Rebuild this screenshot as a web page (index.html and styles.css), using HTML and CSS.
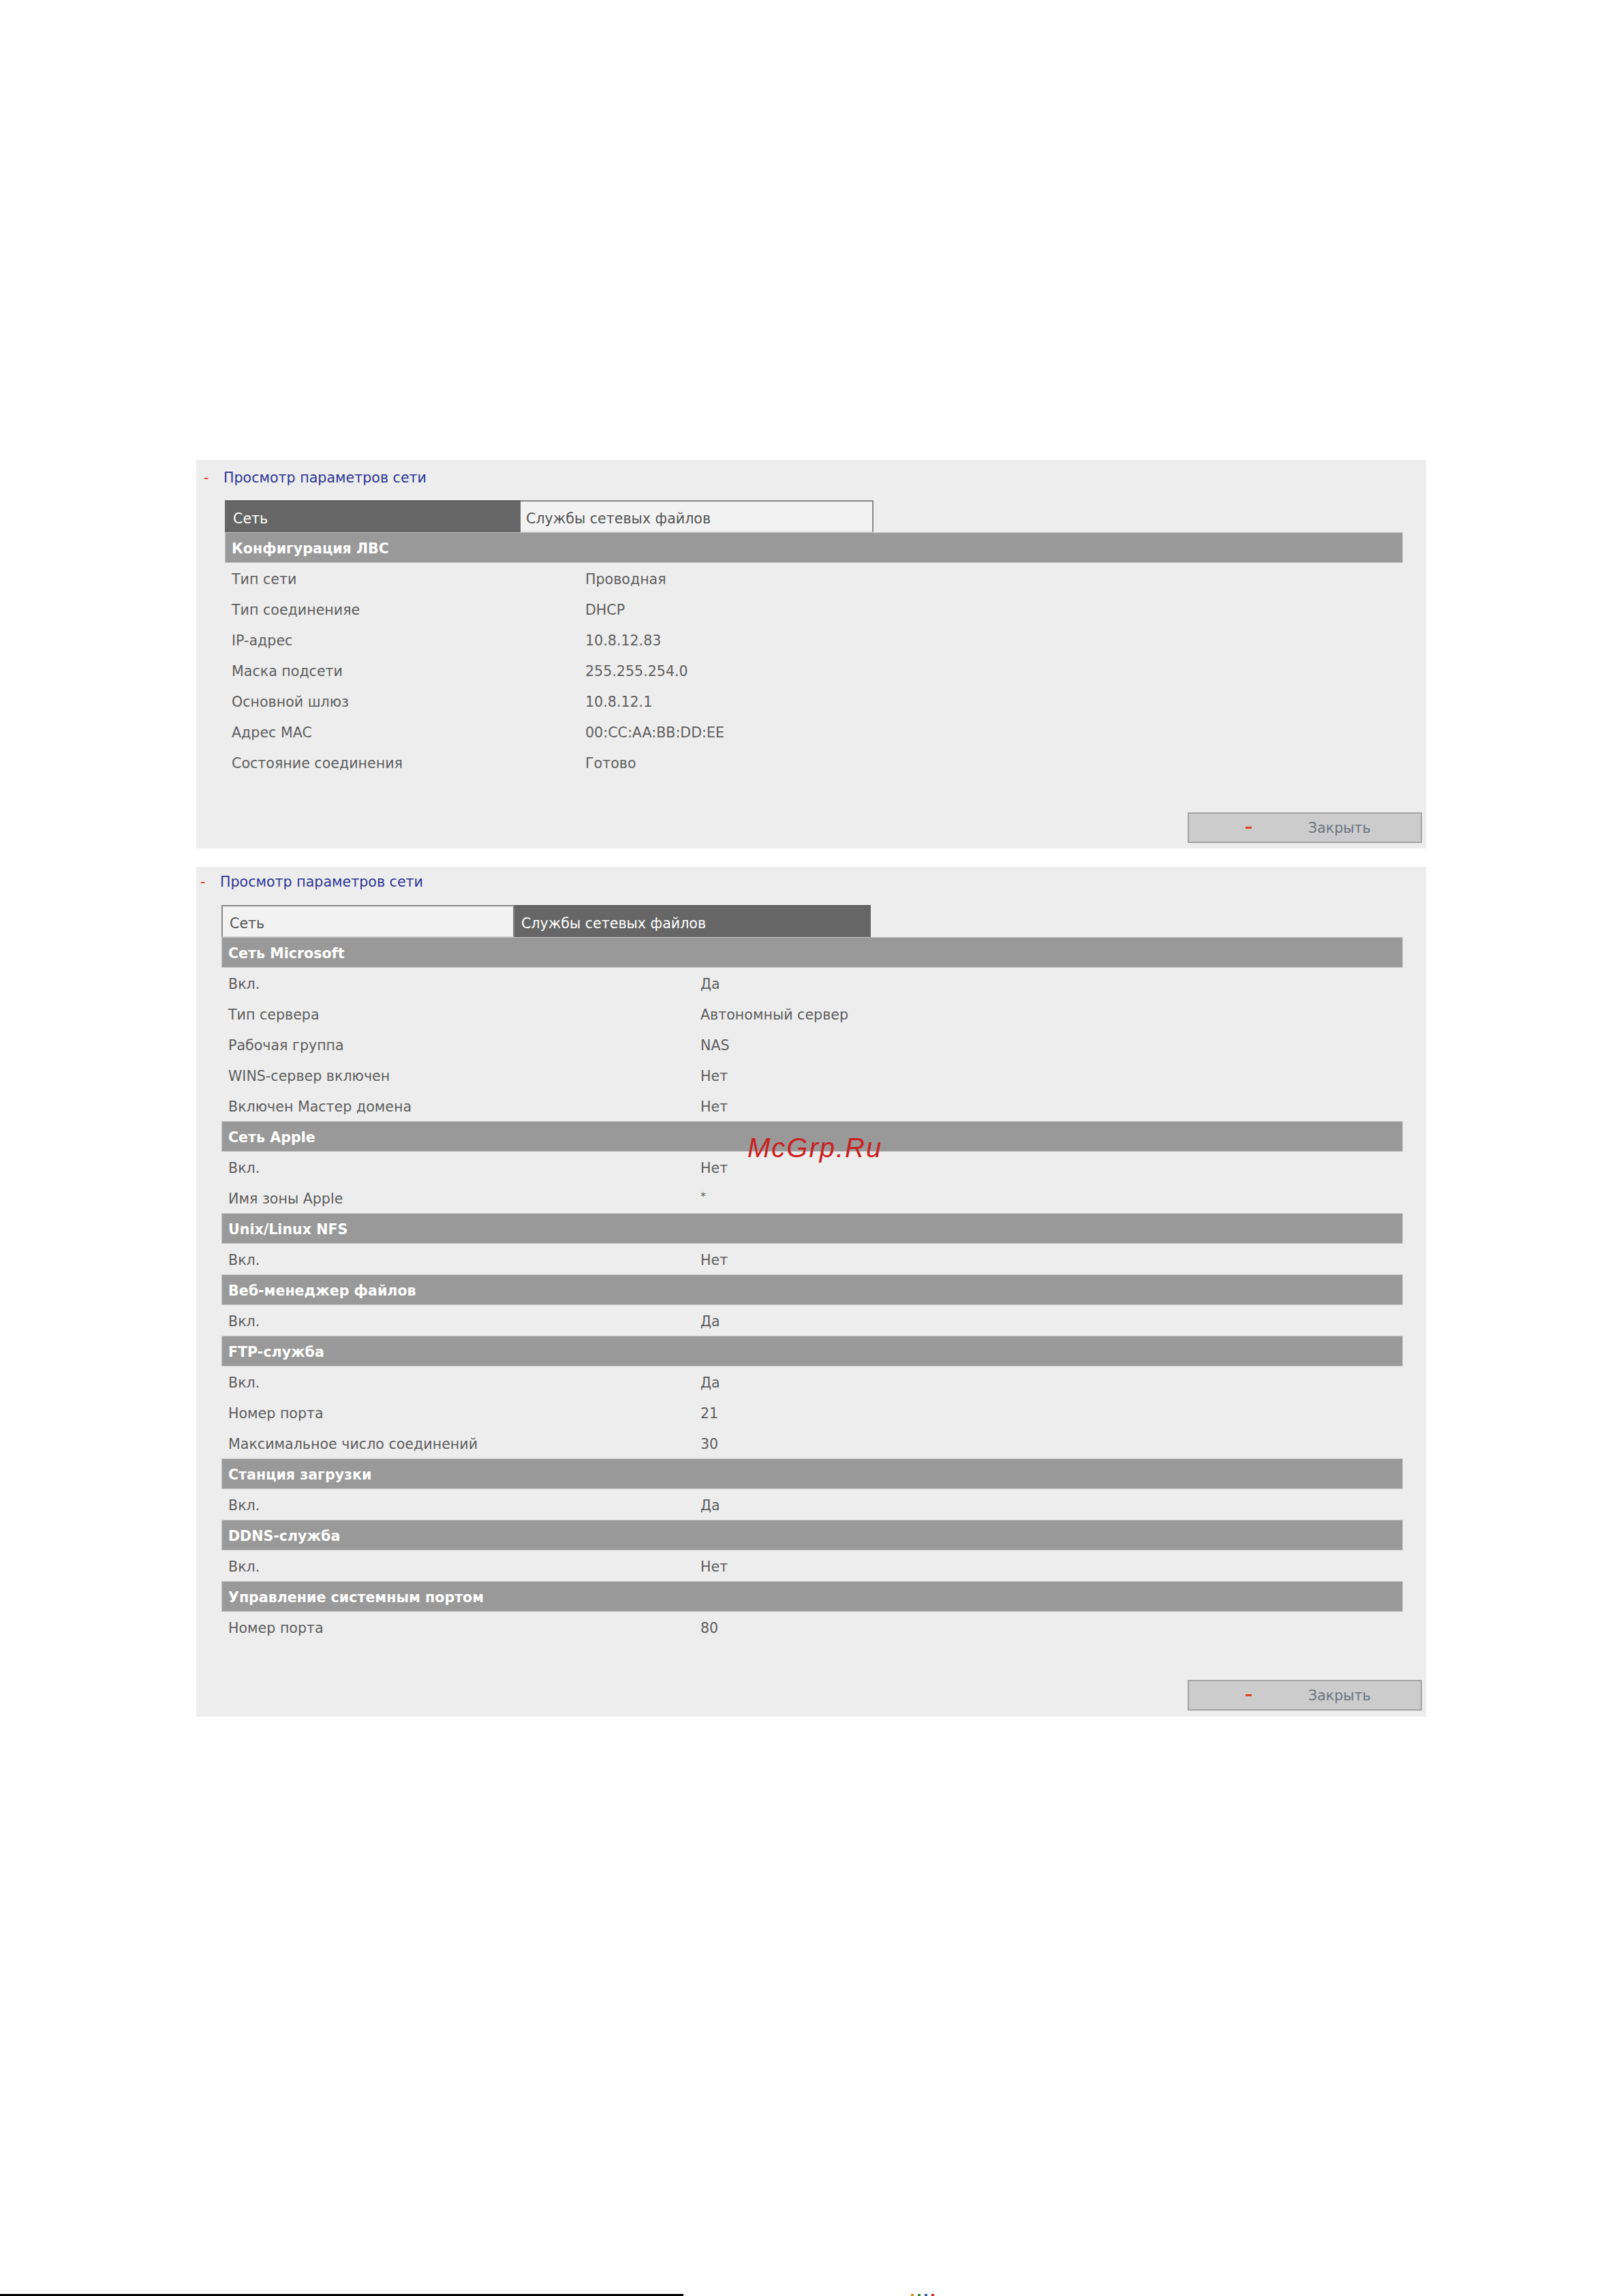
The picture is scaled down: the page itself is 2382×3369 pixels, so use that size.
FILE: index.html
```html
<!DOCTYPE html>
<html lang="ru">
<head>
<meta charset="utf-8">
<title>Просмотр параметров сети</title>
<link rel="stylesheet" href="styles.css">
</head>
<body>
<div class="page">
  <section class="panel panel--lan">
    <div class="panel-title"><span class="dash">-</span><span class="title-text">Просмотр параметров сети</span></div>
    <div class="content">
      <div class="tabs">
        <div class="tab tab--active">Сеть</div>
        <div class="tab tab--idle tab--wide">Службы сетевых файлов</div>
      </div>
      <div class="section-head">Конфигурация ЛВС</div>
      <div class="rows">
        <div class="row"><span class="label">Тип сети</span><span class="value">Проводная</span></div>
        <div class="row"><span class="label">Тип соединенияе</span><span class="value">DHCP</span></div>
        <div class="row"><span class="label">IP-адрес</span><span class="value">10.8.12.83</span></div>
        <div class="row"><span class="label">Маска подсети</span><span class="value">255.255.254.0</span></div>
        <div class="row"><span class="label">Основной шлюз</span><span class="value">10.8.12.1</span></div>
        <div class="row"><span class="label">Адрес MAC</span><span class="value">00:CC:AA:BB:DD:EE</span></div>
        <div class="row"><span class="label">Состояние соединения</span><span class="value">Готово</span></div>
      </div>
    </div>
    <div class="actions">
      <button class="close-btn" type="button"><span class="btn-dash"></span><span class="btn-text">Закрыть</span></button>
    </div>
  </section>

  <section class="panel panel--files">
    <div class="panel-title"><span class="dash">-</span><span class="title-text">Просмотр параметров сети</span></div>
    <div class="content">
      <div class="tabs">
        <div class="tab tab--idle">Сеть</div>
        <div class="tab tab--active tab--wide">Службы сетевых файлов</div>
      </div>
      <div class="section-head">Сеть Microsoft</div>
      <div class="rows">
        <div class="row"><span class="label">Вкл.</span><span class="value">Да</span></div>
        <div class="row"><span class="label">Тип сервера</span><span class="value">Автономный сервер</span></div>
        <div class="row"><span class="label">Рабочая группа</span><span class="value">NAS</span></div>
        <div class="row"><span class="label">WINS-сервер включен</span><span class="value">Нет</span></div>
        <div class="row"><span class="label">Включен Мастер домена</span><span class="value">Нет</span></div>
      </div>
      <div class="section-head">Сеть Apple</div>
      <div class="rows">
        <div class="row"><span class="label">Вкл.</span><span class="value">Нет</span></div>
        <div class="row"><span class="label">Имя зоны Apple</span><span class="value value--star">*</span></div>
      </div>
      <div class="section-head">Unix/Linux NFS</div>
      <div class="rows">
        <div class="row"><span class="label">Вкл.</span><span class="value">Нет</span></div>
      </div>
      <div class="section-head">Веб-менеджер файлов</div>
      <div class="rows">
        <div class="row"><span class="label">Вкл.</span><span class="value">Да</span></div>
      </div>
      <div class="section-head">FTP-служба</div>
      <div class="rows">
        <div class="row"><span class="label">Вкл.</span><span class="value">Да</span></div>
        <div class="row"><span class="label">Номер порта</span><span class="value">21</span></div>
        <div class="row"><span class="label">Максимальное число соединений</span><span class="value">30</span></div>
      </div>
      <div class="section-head">Станция загрузки</div>
      <div class="rows">
        <div class="row"><span class="label">Вкл.</span><span class="value">Да</span></div>
      </div>
      <div class="section-head">DDNS-служба</div>
      <div class="rows">
        <div class="row"><span class="label">Вкл.</span><span class="value">Нет</span></div>
      </div>
      <div class="section-head">Управление системным портом</div>
      <div class="rows">
        <div class="row"><span class="label">Номер порта</span><span class="value">80</span></div>
      </div>
    </div>
    <div class="actions">
      <button class="close-btn" type="button"><span class="btn-dash"></span><span class="btn-text">Закрыть</span></button>
    </div>
  </section>

  <div class="watermark">McGrp.Ru</div>

  <div class="spacer"></div>
  <div class="footer">
    <div class="footer-rule"></div>
    <div class="footer-marks"><span class="mk mk-o"></span><span class="mk mk-g"></span><span class="mk mk-b"></span><span class="mk mk-r"></span></div>
  </div>
</div>
</body>
</html>
```

FILE: styles.css
```css
* { box-sizing: border-box; }

html, body {
  margin: 0;
  padding: 0;
  background: #ffffff;
}

body {
  font-family: "DejaVu Sans", "Liberation Sans", sans-serif;
  font-size: 20.6px;
  color: #5e5e5e;
}

.page {
  position: relative;
  width: 2382px;
  height: 3369px;
  display: flex;
  flex-direction: column;
  padding-top: 675px;
}

.panel {
  width: 1805px;
  margin-left: 288px;
  background: #ededed;
  display: flex;
  flex-direction: column;
}

.panel--files {
  margin-top: 27px;
}

.panel-title {
  height: 59px;
  display: flex;
  align-items: center;
  padding-bottom: 8px;
  padding-left: 11px;
}

.panel--files .panel-title {
  height: 56px;
  padding-bottom: 13px;
  padding-left: 6px;
}

.dash {
  color: #e02b2b;
  width: 29px;
}

.title-text {
  color: #2f3596;
}

.content {
  margin-left: 42px;
  margin-right: 34px;
}

.panel--files .content {
  margin-left: 37px;
}

.tabs {
  display: flex;
  height: 47px;
}

.tab {
  width: 434px;
  display: flex;
  align-items: center;
  padding-left: 12px;
  padding-top: 5px;
}

.tab--wide {
  width: 518px;
  padding-left: 8px;
}

.tab--active {
  background: #666666;
  color: #ffffff;
  border-top: 2px solid #5c5c5c;
}

.tab--idle {
  background: #f2f2f2;
  color: #555555;
  border: 2px solid #888888;
  border-bottom: 1px solid #cfcfcf;
}

.panel--lan .tab--idle {
  border-left: 0;
}

.panel--files .tab--idle {
  width: 430px;
  padding-left: 10px;
}

.panel--files .tab--wide {
  width: 523px;
  padding-left: 10px;
}

.section-head {
  height: 45px;
  background: #999999;
  border: 1px solid #c4c4c4;
  color: #ffffff;
  font-weight: bold;
  display: flex;
  align-items: center;
  padding-left: 9px;
  padding-top: 2px;
}

.rows {
  display: flex;
  flex-direction: column;
}

.row {
  height: 45px;
  display: grid;
  grid-template-columns: 519px 1fr;
  align-items: center;
  padding-left: 10px;
  padding-top: 3px;
}

.panel--files .row {
  grid-template-columns: 693px 1fr;
}

.label, .value {
  color: #5e5e5e;
  white-space: nowrap;
}

.value--star {
  font-size: 16px;
  align-self: start;
  padding-top: 8px;
}

.actions {
  display: flex;
  justify-content: flex-end;
  padding: 51px 6px 8px 0;
}

.panel--files .actions {
  padding-top: 55px;
  padding-bottom: 9px;
}

.close-btn {
  width: 344px;
  height: 45px;
  background: #cccccc;
  border: 2px solid #a3a3a3;
  display: flex;
  align-items: center;
  padding: 0 0 0 83px;
  font-family: "DejaVu Sans", "Liberation Sans", sans-serif;
  font-size: 20.6px;
  color: #6c7380;
}

.btn-dash {
  width: 9px;
  height: 3px;
  background: #e0401e;
  margin-right: 83px;
}

.watermark {
  position: absolute;
  left: 1097px;
  top: 1662px;
  font-family: "Liberation Sans", sans-serif;
  font-style: italic;
  font-size: 40px;
  letter-spacing: 2px;
  color: #cc1f1f;
}

.spacer {
  flex: 1;
}

.footer {
  height: 3px;
  display: flex;
  align-items: flex-end;
}

.footer-rule {
  width: 1003px;
  height: 3px;
  background: #000000;
}

.footer-marks {
  display: flex;
  gap: 6px;
  margin-left: 334px;
  height: 3px;
}

.mk {
  width: 4px;
  height: 3px;
}
.mk-o { background: #d8891c; }
.mk-g { background: #2f8f3a; }
.mk-b { background: #3355aa; }
.mk-r { background: #cc2222; }
```
